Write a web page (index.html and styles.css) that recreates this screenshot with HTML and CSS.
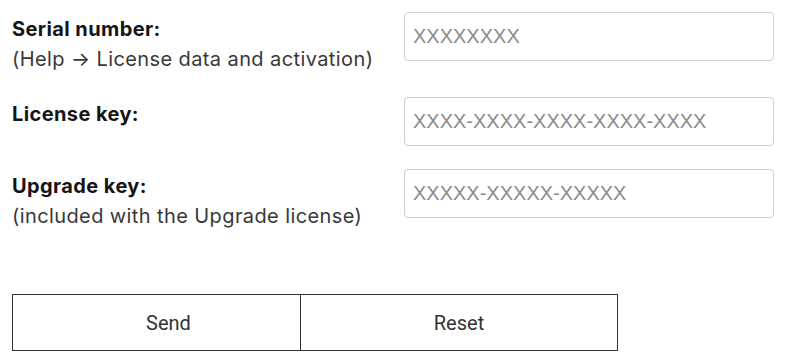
FILE: index.html
```html
<!DOCTYPE html>
<html lang="en">
  <head>
    <meta charset="UTF-8" />
    <meta name="viewport" content="width=device-width, initial-scale=1.0" />
    <title>License activation</title>
    <link rel="stylesheet" href="styles.css">
  </head>
  <body>
    <form class="license-form">
      <div class="field">
        <label class="field-label" for="serial">
          <strong>Serial number:</strong>
          <span class="hint">(Help &rarr; License data and activation)</span>
        </label>
        <input class="field-input" id="serial" type="text" placeholder="XXXXXXXX" />
      </div>

      <div class="field">
        <label class="field-label" for="license">
          <strong>License key:</strong>
        </label>
        <input class="field-input" id="license" type="text" placeholder="XXXX-XXXX-XXXX-XXXX-XXXX" />
      </div>

      <div class="field">
        <label class="field-label" for="upgrade">
          <strong>Upgrade key:</strong>
          <span class="hint">(included with the Upgrade license)</span>
        </label>
        <input class="field-input" id="upgrade" type="text" placeholder="XXXXX-XXXXX-XXXXX" />
      </div>

      <div class="actions">
        <button class="btn btn-send" type="submit">Send</button>
        <button class="btn btn-reset" type="reset">Reset</button>
      </div>
    </form>
  </body>
</html>
```

FILE: styles.css
```css
*,
*::before,
*::after {
  box-sizing: border-box;
}
:root {
  --text: #151515;
  --hint: #383838;
  --border: #cfcfcf;
  --placeholder: #8c8c8c;
}
body {
  margin: 0;
  background: #fff;
  font-family: "Inter", "Noto Sans", sans-serif;
  color: var(--text);
}

.license-form {
  padding: 12px 0 0 12px;
}

.field {
  display: flex;
  align-items: flex-start;
  margin-bottom: 23px;
}

.field-label {
  width: 392px;
  padding-top: 2px;
  font-size: 20px;
  line-height: 30px;
  letter-spacing: 0.4px;
}

.field-label strong {
  display: block;
  font-weight: 700;
}

.hint {
  display: block;
  color: var(--hint);
}

.field-input {
  width: 370px;
  height: 49px;
  padding: 0 8px;
  border: 1px solid var(--border);
  border-radius: 4px;
  font-family: "Liberation Sans", Arial, sans-serif;
  font-size: 20px;
  color: var(--text);
}

.field-input::placeholder {
  color: var(--placeholder);
}

.actions {
  display: flex;
  margin-top: 63px;
}

.btn {
  height: 57px;
  background: #fff;
  border: 1px solid #333;
  font-family: "Roboto", sans-serif;
  font-size: 20px;
  color: #333;
}

.btn-send {
  width: 289px;
  padding-left: 30px;
}

.btn-reset {
  width: 317px;
  border-left: none;
}
```
